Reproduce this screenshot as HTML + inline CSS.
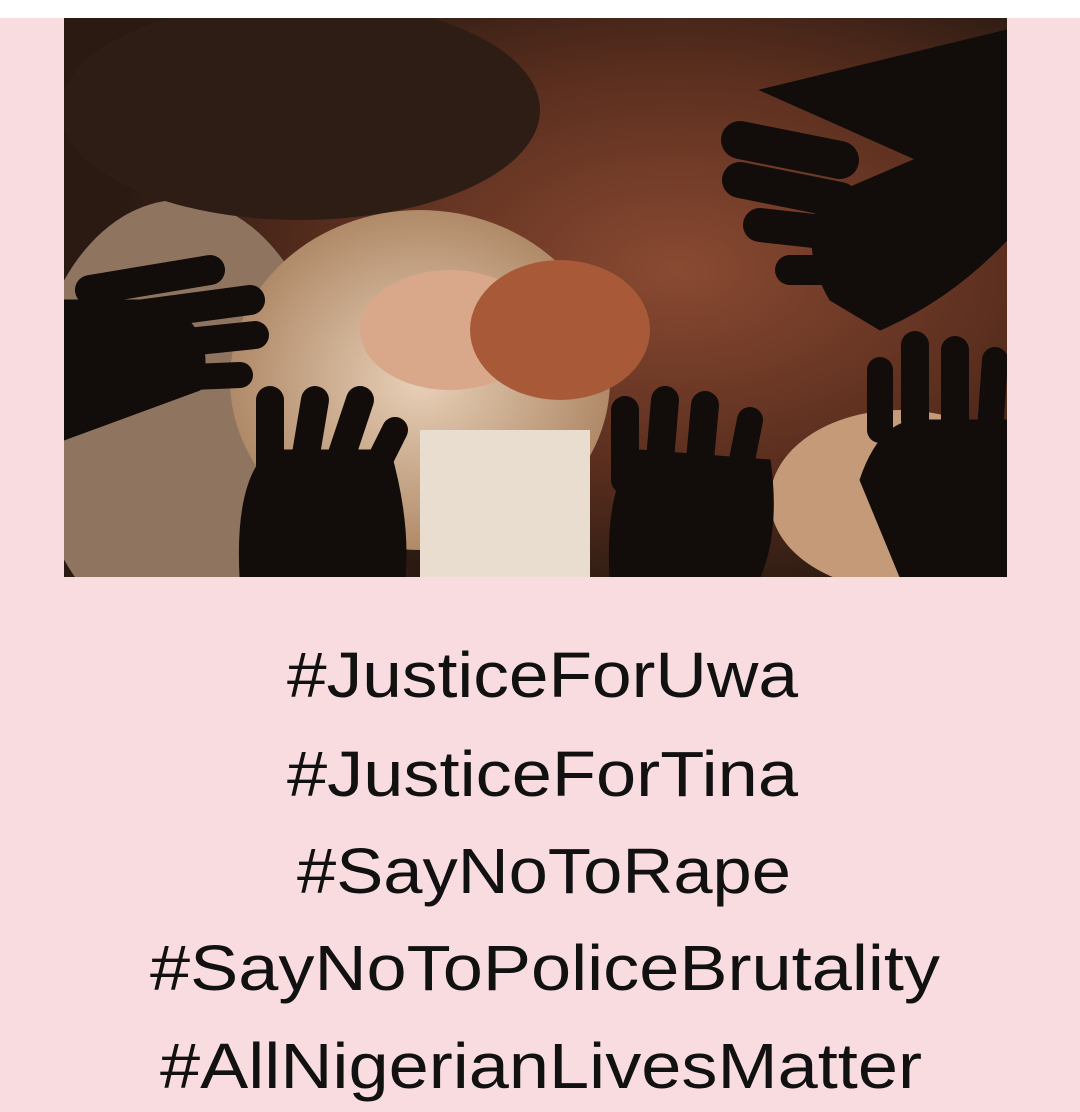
<!DOCTYPE html>
<html><head><style>
html,body{margin:0;padding:0;}
body{width:1080px;height:1112px;background:#f9dcdf;position:relative;overflow:hidden;font-family:"Liberation Sans",sans-serif;}
.top{position:absolute;left:0;top:0;width:1080px;height:18px;background:#fff;}
</style></head><body>
<div class="top"></div>
<svg width="1080" height="1112" style="position:absolute;left:0;top:0">
<defs>
<radialGradient id="bg" cx="0.65" cy="0.45" r="0.6">
<stop offset="0" stop-color="#8a4a32"/><stop offset="0.6" stop-color="#5a2e1e"/><stop offset="1" stop-color="#2a1a12"/>
</radialGradient>
<radialGradient id="fig" cx="0.5" cy="0.5" r="0.5">
<stop offset="0" stop-color="#e8d0b8"/><stop offset="1" stop-color="#b08a68"/>
</radialGradient>
<clipPath id="c"><rect x="64" y="18" width="943" height="559"/></clipPath>
</defs>
<g clip-path="url(#c)">
<rect x="64" y="18" width="943" height="559" fill="url(#bg)"/>
<ellipse cx="180" cy="420" rx="150" ry="220" fill="#8f7460"/>
<ellipse cx="300" cy="110" rx="240" ry="110" fill="#2e1d15"/>
<ellipse cx="420" cy="380" rx="190" ry="170" fill="url(#fig)"/>
<ellipse cx="450" cy="330" rx="90" ry="60" fill="#d9a88a"/>
<ellipse cx="560" cy="330" rx="90" ry="70" fill="#a85a38"/>
<rect x="420" y="430" width="170" height="147" fill="#e9ddd0"/>
<ellipse cx="900" cy="500" rx="130" ry="90" fill="#c49a78"/>
<g fill="#120c0b" stroke="#120c0b" stroke-linecap="round">
<path d="M830 300 Q800 250 820 200 L1007 120 L1007 240 Q950 300 880 330 Z"/>
<path d="M760 90 L1007 30 L1007 200 Z"/>
<line x1="740" y1="140" x2="840" y2="160" stroke-width="38"/>
<line x1="740" y1="180" x2="840" y2="200" stroke-width="36"/>
<line x1="760" y1="225" x2="850" y2="235" stroke-width="34"/>
<line x1="790" y1="270" x2="860" y2="270" stroke-width="30"/>
<path d="M64 300 L160 300 Q220 330 200 390 L64 440 Z"/>
<line x1="90" y1="290" x2="210" y2="270" stroke-width="30"/>
<line x1="100" y1="320" x2="250" y2="300" stroke-width="30"/>
<line x1="110" y1="350" x2="255" y2="335" stroke-width="28"/>
<line x1="120" y1="380" x2="240" y2="375" stroke-width="26"/>
<path d="M240 577 Q235 480 270 450 L390 450 Q410 520 405 577 Z"/>
<line x1="270" y1="470" x2="270" y2="400" stroke-width="28"/>
<line x1="305" y1="460" x2="315" y2="400" stroke-width="28"/>
<line x1="340" y1="460" x2="360" y2="400" stroke-width="28"/>
<line x1="375" y1="470" x2="395" y2="430" stroke-width="26"/>
<path d="M610 577 Q605 480 640 450 L770 460 Q780 530 760 577 Z"/>
<line x1="625" y1="480" x2="625" y2="410" stroke-width="28"/>
<line x1="660" y1="460" x2="665" y2="400" stroke-width="28"/>
<line x1="700" y1="460" x2="705" y2="405" stroke-width="28"/>
<line x1="740" y1="470" x2="750" y2="420" stroke-width="26"/>
<path d="M860 480 Q880 420 920 420 L1007 420 L1007 577 L900 577 Z"/>
<line x1="880" y1="430" x2="880" y2="370" stroke-width="26"/>
<line x1="915" y1="420" x2="915" y2="345" stroke-width="28"/>
<line x1="955" y1="420" x2="955" y2="350" stroke-width="28"/>
<line x1="990" y1="430" x2="995" y2="360" stroke-width="26"/>
</g>
</g>
<g font-family="Liberation Sans, sans-serif" font-size="64" fill="#111" text-anchor="start">
<text x="287" y="697" textLength="511" lengthAdjust="spacingAndGlyphs">#JusticeForUwa</text>
<text x="287" y="796" textLength="511" lengthAdjust="spacingAndGlyphs">#JusticeForTina</text>
<text x="297" y="893" textLength="494" lengthAdjust="spacingAndGlyphs">#SayNoToRape</text>
<text x="150" y="990" textLength="790" lengthAdjust="spacingAndGlyphs">#SayNoToPoliceBrutality</text>
<text x="160" y="1088" textLength="762" lengthAdjust="spacingAndGlyphs">#AllNigerianLivesMatter</text>
</g>
</svg>
</body></html>
